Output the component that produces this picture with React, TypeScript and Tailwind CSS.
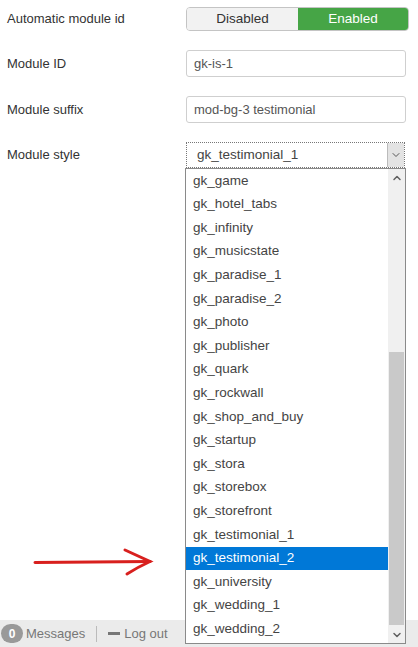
import { ChevronDown, ChevronUp } from "lucide-react";

const styles = [
  "gk_game",
  "gk_hotel_tabs",
  "gk_infinity",
  "gk_musicstate",
  "gk_paradise_1",
  "gk_paradise_2",
  "gk_photo",
  "gk_publisher",
  "gk_quark",
  "gk_rockwall",
  "gk_shop_and_buy",
  "gk_startup",
  "gk_stora",
  "gk_storebox",
  "gk_storefront",
  "gk_testimonial_1",
  "gk_testimonial_2",
  "gk_university",
  "gk_wedding_1",
  "gk_wedding_2",
];

const selected = "gk_testimonial_2";

function Row({ label, children }: { label: string; children: React.ReactNode }) {
  return (
    <div className="flex items-center">
      <div className="w-[186px] pl-[7px] text-[13px] text-[#333]">{label}</div>
      {children}
    </div>
  );
}

function TextInput({ value }: { value: string }) {
  return (
    <div className="flex h-[27px] w-[220px] items-center rounded-[3px] border border-[#cfcfcf] bg-white pl-[7px] text-[13px] text-[#555]">
      {value}
    </div>
  );
}

function StyleDropdown() {
  return (
    <div className="absolute left-[-1px] top-[26px] z-10 flex h-[476px] w-[221px] border border-[#8a8a8a] bg-white">
      <ul className="flex-1">
        {styles.map((s) => (
          <li
            key={s}
            className={`flex h-[23.6px] items-center pl-[7px] text-[13.5px] ${
              s === selected ? "bg-[#0078d7] text-white" : "text-[#444]"
            }`}
          >
            {s}
          </li>
        ))}
      </ul>
      {/* scrollbar */}
      <div className="flex w-[17px] flex-col bg-[#f0f0f0]">
        <div className="flex h-[17px] items-center justify-center text-[#606060]">
          <ChevronUp className="h-3 w-3" strokeWidth={3} />
        </div>
        <div className="h-[166px]" />
        <div className="mx-[1px] h-[273px] bg-[#c9c9c9]" />
        <div className="flex-1" />
        <div className="flex h-[17px] items-center justify-center text-[#606060]">
          <ChevronDown className="h-3 w-3" strokeWidth={3} />
        </div>
      </div>
    </div>
  );
}

export default function App() {
  return (
    <div className="relative flex h-[647px] w-[418px] flex-col overflow-hidden bg-white font-['Liberation_Sans',Arial,sans-serif]">
      <div className="flex flex-col gap-[19px] pt-[7px]">
        <Row label="Automatic module id">
          <div className="flex h-[24px] w-[223px] overflow-hidden rounded-[4px] border border-[#c4c4c4] text-[13.5px]">
            <div className="flex w-[111px] items-center justify-center bg-[#f2f2f2] text-[#333]">Disabled</div>
            <div className="flex flex-1 items-center justify-center bg-[#46a546] text-white">Enabled</div>
          </div>
        </Row>
        <Row label="Module ID">
          <TextInput value="gk-is-1" />
        </Row>
        <Row label="Module suffix">
          <TextInput value="mod-bg-3 testimonial" />
        </Row>
        <Row label="Module style">
          <div className="relative">
            <div className="flex h-[26px] w-[219px] items-center border border-dotted border-[#777] bg-white text-[13.5px] text-[#444]">
              <span className="flex-1 pl-[10px]">gk_testimonial_1</span>
              <span className="flex h-full w-[17px] items-center justify-center border-l border-[#bbb] bg-[#e3e3e3] text-[#555]">
                <ChevronDown className="h-3 w-3" strokeWidth={2} />
              </span>
            </div>
            <StyleDropdown />
          </div>
        </Row>
      </div>

      {/* annotation arrow */}
      <svg className="absolute left-[30px] top-[545px]" width="130" height="35" viewBox="0 0 130 35">
        <path d="M5 17.5 L120 16.5" stroke="#d8201e" strokeWidth="3" fill="none" strokeLinecap="round" />
        <path d="M95 5 Q108 11 120 16.5 Q108 22 97 29" stroke="#d8201e" strokeWidth="3" fill="none" strokeLinecap="round" />
      </svg>

      <footer className="mt-auto flex h-[27px] items-center gap-[3px] bg-[#ebebeb] pl-[1px] text-[13px] text-[#777]">
        <span className="flex h-[19px] min-w-[22px] items-center justify-center rounded-full bg-[#999] px-[6px] text-[12px] font-bold text-white">
          0
        </span>
        <span>Messages</span>
        <span className="mx-[8px] h-[16px] border-l border-[#bbb]" />
        <span className="flex items-center gap-[4px]">
          <span className="h-[3px] w-[12px] bg-[#777]" />
          Log out
        </span>
      </footer>
    </div>
  );
}
